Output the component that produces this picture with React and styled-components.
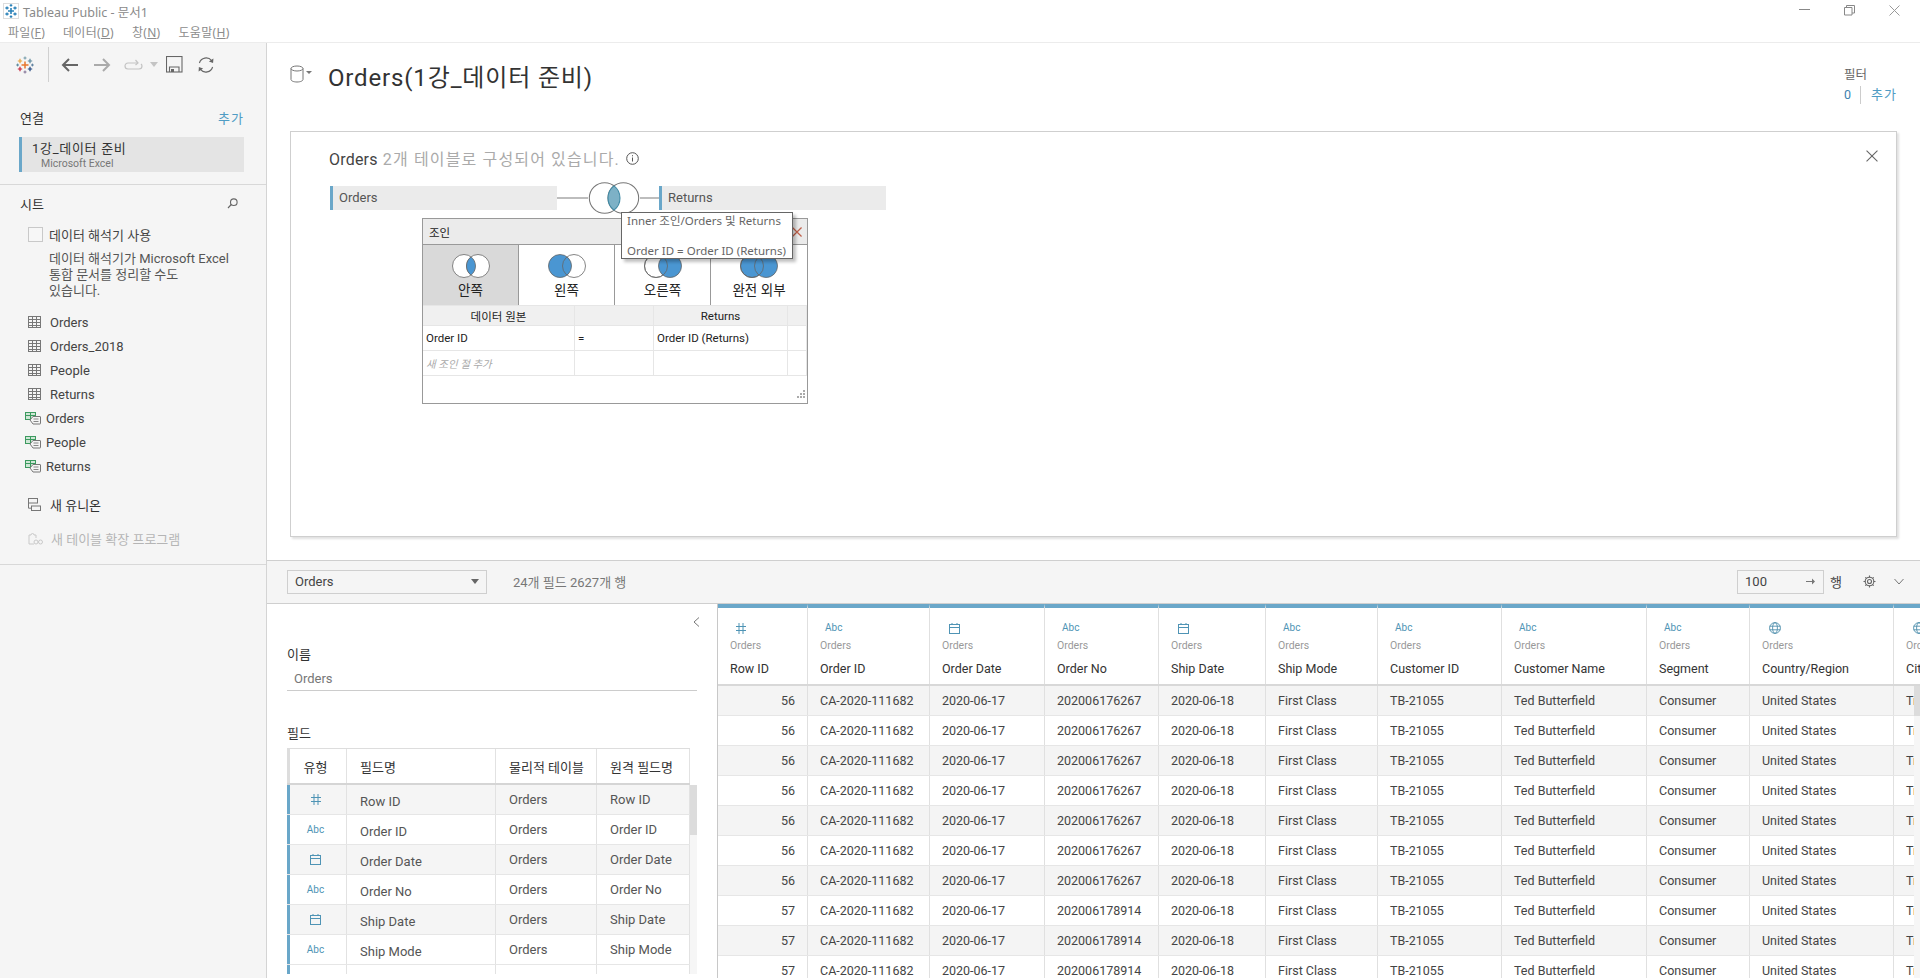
import React from 'react';
import styled, { createGlobalStyle } from 'styled-components';

const GlobalStyle = createGlobalStyle`
  html, body { margin: 0; padding: 0; height: 100%; overflow: hidden; background: #fff; }
  body { font-family: Roboto, "Noto Sans CJK KR", sans-serif; font-size: 13px; color: #333; }
  * { box-sizing: border-box; }
`;

const Shell = styled.div`
  width: 1920px;
  height: 978px;
  display: flex;
  flex-direction: column;
  overflow: hidden;
`;

const TitleBar = styled.div`
  height: 22px;
  display: flex;
  align-items: center;
  padding-left: 3px;
  gap: 4px;
  font-family: "Noto Sans", "Noto Sans CJK KR", sans-serif;
  font-size: 12.5px;
  color: #8a8a8a;
`;

const WindowButtons = styled.div`
  margin-left: auto;
  display: flex;
  gap: 34px;
  padding-right: 20px;
  padding-bottom: 2px;
  align-items: center;
`;

const MenuBar = styled.div`
  height: 21px;
  display: flex;
  align-items: center;
  padding-left: 8px;
  gap: 18px;
  font-family: "Noto Sans", "Noto Sans CJK KR", sans-serif;
  font-size: 12px;
  letter-spacing: 0.3px;
  color: #8c8c8c;
  border-bottom: 1px solid #ececec;
`;

const Body = styled.div`
  flex: 1;
  display: flex;
  min-height: 0;
`;

const Sidebar = styled.aside`
  width: 267px;
  flex: none;
  background: #f5f5f5;
  border-right: 1px solid #d4d4d4;
`;

const Toolbar = styled.div`
  height: 45px;
  display: flex;
  align-items: center;
  padding-left: 16px;
  padding-bottom: 2px;
`;

const ToolDivider = styled.div`
  width: 1px;
  height: 35px;
  background: #d0d0d0;
  margin: 0 12px 0 14px;
`;

const ToolSlot = styled.div`
  display: flex;
  align-items: center;
  margin-left: ${p => p.$ml || 0}px;
`;

const SideSection = styled.section`
  padding-bottom: ${p => p.$pb}px;
  border-bottom: 1px solid #d8d8d8;
`;

const SectionHead = styled.div`
  display: flex;
  align-items: center;
  justify-content: space-between;
  height: 24px;
  padding: 0 22px 0 20px;
  margin-top: ${p => p.$mt || 0}px;
  font-size: 13px;
  color: #333;
`;

const SearchSlot = styled.span`
  display: flex;
  margin-right: 6px;
`;

const BlueLink = styled.span`
  font-size: 13px;
  letter-spacing: 1px;
  color: #4f9cc4;
`;

const Connection = styled.div`
  margin: 8px 22px 0 19px;
  height: 35px;
  background: #e4e4e4;
  border-left: 3px solid #6aa7c9;
  padding: 3px 0 0 10px;
  font-size: 13px;
  letter-spacing: 0.7px;
  line-height: 18px;
  color: #333;
`;

const ConnectionKind = styled.div`
  font-size: 10.5px;
  letter-spacing: 0;
  line-height: 12px;
  color: #777;
  padding-left: 9px;
`;

const CheckRow = styled.label`
  display: flex;
  align-items: center;
  gap: 6px;
  padding-left: 28px;
  margin-top: 11px;
  height: 16px;
  color: #444;
`;

const CheckBox = styled.span`
  width: 15px;
  height: 15px;
  border: 1px solid #c9c9c9;
  background: #f7f7f7;
`;

const Note = styled.p`
  margin: 9px 0 0;
  padding-left: 49px;
  line-height: 16px;
  height: 48px;
  color: #555;
`;

const SheetList = styled.div`
  margin-top: 11px;
`;

const SheetRow = styled.div`
  height: 24px;
  display: flex;
  align-items: center;
  padding-left: ${p => (p.$extract ? 25 : 28)}px;
  gap: ${p => (p.$extract ? 5 : 9)}px;
  color: #444;
`;

const ActionRow = styled.div`
  height: 24px;
  display: flex;
  align-items: center;
  gap: 8px;
  padding-left: 28px;
  margin-top: ${p => p.$mt}px;
  color: ${p => (p.$disabled ? '#b5b5b5' : '#333')};
`;

const Main = styled.main`
  flex: 1;
  min-width: 0;
  display: flex;
  flex-direction: column;
`;

const PageHead = styled.div`
  height: 88px;
  display: flex;
  padding: 20px 23px 0 23px;
`;

const CylinderSlot = styled.div`
  display: flex;
  padding-top: 2px;
  gap: 2px;
  width: 38px;
`;

const PageTitle = styled.h1`
  margin: 2px 0 0;
  font-weight: 400;
  font-size: 24px;
  letter-spacing: 0.85px;
  line-height: 26px;
  color: #333;
`;

const FilterBox = styled.div`
  margin-left: auto;
  width: 53px;
  padding-top: 4px;
  font-size: 12.5px;
  color: #666;
  line-height: 16px;
`;

const FilterCount = styled.div`
  display: flex;
  align-items: center;
  margin-top: 3px;
`;

const FilterNum = styled.span`
  width: 17px;
  color: #3f82b0;
  border-right: 1px solid #ccc;
  margin-right: 10px;
  line-height: 18px;
`;

const CanvasCard = styled.div`
  position: relative;
  margin: 0 23px;
  height: 406px;
  border: 1px solid #cfcfcf;
  box-shadow: 2px 2px 2px rgba(0, 0, 0, 0.12);
  padding: 15px 0 0 39px;
`;

const CardHeading = styled.div`
  display: flex;
  align-items: center;
  gap: 6px;
  height: 22px;
  margin-left: -1px;
  font-size: 16px;
  letter-spacing: 1.15px;
  color: #aaa;
`;

const CardTable = styled.span`
  color: #444;
  letter-spacing: 0.2px;
`;

const CardClose = styled.div`
  position: absolute;
  right: 18px;
  top: 18px;
`;

const JoinRow = styled.div`
  display: flex;
  align-items: center;
  height: 24px;
  margin-top: 17px;
`;

const TableBar = styled.div`
  width: 227px;
  height: 24px;
  background: #ebebeb;
  border-left: 3px solid #6aa7c9;
  padding-left: 6px;
  line-height: 24px;
  color: #555;
`;

const Connector = styled.div`
  width: ${p => p.$w}px;
  height: 2px;
  background: #bdbdbd;
`;

const JoinDialog = styled.div`
  position: absolute;
  left: 131px;
  top: 86px;
  width: 386px;
  height: 186px;
  border: 1px solid #999;
  background: #fff;
  font-family: "Noto Sans", "Noto Sans CJK KR", sans-serif;
  font-size: 11.5px;
  color: #222;
`;

const DialogHead = styled.div`
  height: 26px;
  background: #ebebeb;
  border-bottom: 1px solid #999;
  display: flex;
  align-items: center;
  justify-content: space-between;
  padding: 0 5px 0 6px;
`;

const JoinTabs = styled.div`
  display: grid;
  grid-template-columns: repeat(4, 96px);
  height: 60px;
`;

const JoinTab = styled.div`
  display: flex;
  flex-direction: column;
  align-items: center;
  padding-top: 9px;
  font-size: 13.5px;
  line-height: 20px;
  background: ${p => (p.$active ? '#d9d9d9' : '#fff')};
  border-right: 1px solid #999;
  &:last-child { border-right: none; }
`;

const TabLabel = styled.span`
  margin-top: 2px;
`;

const JoinGridRow = styled.div`
  display: grid;
  grid-template-columns: 152px 79px 134px 19px;
  height: ${p => p.$h}px;
  background: ${p => (p.$head ? '#f0f0f0' : '#fff')};
  border-bottom: 1px solid #e6e6e6;
  border-top: ${p => (p.$head ? '1px solid #e6e6e6' : 'none')};
  font-family: Roboto, "Noto Sans CJK KR", sans-serif;
`;

const JoinCell = styled.div`
  display: flex;
  align-items: center;
  justify-content: ${p => (p.$center ? 'center' : 'flex-start')};
  padding-left: ${p => (p.$center ? 0 : 3)}px;
  border-right: 1px solid #e6e6e6;
  font-style: ${p => (p.$hint ? 'italic' : 'normal')};
  font-size: ${p => (p.$hint ? 10.5 : 11.5)}px;
  color: ${p => (p.$hint ? '#aaa' : '#222')};
`;

const Grip = styled.div`
  position: absolute;
  right: 1px;
  bottom: 1px;
`;

const Tooltip = styled.div`
  position: absolute;
  left: 330px;
  top: 80px;
  width: 172px;
  height: 47px;
  background: #fff;
  border: 1px solid #666;
  box-shadow: 3px 3px 3px rgba(0, 0, 0, 0.25);
  padding: 0 5px;
  font-family: "Noto Sans", "Noto Sans CJK KR", sans-serif;
  font-size: 11.5px;
  line-height: 15px;
  color: #666;
  white-space: nowrap;
`;

const DataToolbar = styled.div`
  margin-top: 23px;
  height: 44px;
  flex: none;
  display: flex;
  align-items: center;
  background: #f5f5f5;
  border-top: 1px solid #cfcfcf;
  border-bottom: 1px solid #cfcfcf;
  padding: 0 16px 1px 20px;
`;

const TableSelect = styled.div`
  width: 200px;
  height: 24px;
  display: flex;
  align-items: center;
  justify-content: space-between;
  border: 1px solid #cfcfcf;
  padding: 0 7px;
  color: #444;
`;

const Caret = styled.span`
  width: 0;
  height: 0;
  border-left: ${p => p.$size || 4}px solid transparent;
  border-right: ${p => p.$size || 4}px solid transparent;
  border-top: ${p => (p.$size ? p.$size : 5)}px solid ${p => p.$color || '#666'};
  margin-top: ${p => p.$mt || 0}px;
`;

const RowCount = styled.span`
  margin-left: 26px;
  color: #777;
`;

const LimitBox = styled.div`
  margin-left: auto;
  width: 87px;
  height: 24px;
  display: flex;
  align-items: center;
  justify-content: space-between;
  border: 1px solid #cfcfcf;
  padding: 0 8px 0 7px;
  color: #444;
`;

const RowWord = styled.span`
  margin-left: 6px;
  color: #444;
`;

const ToolIcon = styled.span`
  display: flex;
  margin-left: ${p => p.$ml}px;
`;

const DataArea = styled.div`
  flex: 1;
  min-height: 0;
  display: flex;
`;

const FieldPane = styled.div`
  width: 451px;
  flex: none;
  padding: 0 20px;
  border-right: 1px solid #c8c8c8;
`;

const CollapseRow = styled.div`
  display: flex;
  justify-content: flex-end;
  height: 16px;
  margin: 13px -3px 0 0;
`;

const PaneLabel = styled.div`
  height: 16px;
  line-height: 16px;
  margin-top: ${p => p.$mt}px;
  color: #333;
`;

const NameInput = styled.div`
  height: 24px;
  margin-top: 4px;
  padding-left: 7px;
  line-height: 24px;
  color: #777;
  border-bottom: 1px solid #ccc;
`;

const FieldTableWrap = styled.div`
  position: relative;
  margin-top: 6px;
  height: 226px;
  overflow: hidden;
`;

const FieldGridRow = styled.div`
  display: grid;
  grid-template-columns: 60px 149px 101px 93px;
  width: 403px;
  height: ${p => (p.$head ? 37 : 30)}px;
  background: ${p => (p.$odd ? '#f5f5f5' : '#fff')};
  border-top: ${p => (p.$head ? '1px solid #ddd' : 'none')};
  border-bottom: ${p => (p.$head ? '2px' : '1px')} solid ${p => (p.$head ? '#d5d5d5' : '#e6e6e6')};
`;

const FieldCell = styled.div`
  display: flex;
  align-items: center;
  justify-content: ${p => (p.$center ? 'center' : 'flex-start')};
  padding-left: ${p => (p.$center ? 0 : 13)}px;
  padding-top: ${p => p.$pt || 0}px;
  padding-bottom: ${p => p.$pb || 0}px;
  border-right: 1px solid #e2e2e2;
  color: #555;
`;

const FieldTypeCell = styled(FieldCell)`
  border-left: 3px solid ${p => (p.$head ? '#ddd' : '#6aa7c9')};
  padding-right: 5px;
  color: #333;
`;

const FieldHeadCell = styled(FieldCell)`
  color: #333;
`;

const ScrollTrack = styled.div`
  position: absolute;
  top: ${p => p.$top}px;
  right: 0;
  bottom: 0;
  width: ${p => p.$w}px;
  background: #f6f6f6;
`;

const ScrollThumb = styled.div`
  height: ${p => p.$h}px;
  background: #dcdcdc;
`;

const DataGrid = styled.div`
  position: relative;
  flex: 1;
  min-width: 0;
  overflow: hidden;
`;

const GridRow = styled.div`
  display: flex;
  width: max-content;
  height: ${p => (p.$head ? 82 : 30)}px;
  background: ${p => (p.$odd ? '#f4f4f4' : '#fff')};
  border-bottom: ${p => (p.$head ? '2px' : '1px')} solid ${p => (p.$head ? '#d8d8d8' : '#e6e6e6')};
`;

const GridHead = styled.div`
  width: ${p => p.$w}px;
  flex: none;
  border-top: 4px solid #6aa7c9;
  border-right: 1px solid #e0e0e0;
  padding: 0 0 0 12px;
  display: flex;
  flex-direction: column;
`;

const HeadIcon = styled.div`
  height: 16px;
  margin-top: 12px;
  padding-left: ${p => p.$pl}px;
  display: flex;
  align-items: center;
`;

const HeadSource = styled.div`
  margin-top: 3px;
  font-size: 10.5px;
  line-height: 14px;
  color: #999;
`;

const HeadName = styled.div`
  margin-top: 8px;
  font-size: 12.5px;
  line-height: 16px;
  color: #333;
  white-space: nowrap;
`;

const GridCell = styled.div`
  width: ${p => p.$w}px;
  flex: none;
  display: flex;
  align-items: center;
  justify-content: ${p => (p.$right ? 'flex-end' : 'flex-start')};
  padding: 0 12px;
  border-right: 1px solid #e0e0e0;
  font-size: 12.5px;
  color: #444;
  white-space: nowrap;
`;

const AbcMark = styled.span`
  font-size: 10px;
  line-height: 12px;
  color: #4f94b5;
`;

// icons

function Cross({ x, y, s, color, w = 1.3 }) {
  return (
    <g stroke={color} strokeWidth={w}>
      <path d={`M${x - s} ${y}H${x + s}M${x} ${y - s}V${y + s}`} />
    </g>
  );
}

function TableauLogo() {
  return (
    <svg width="18" height="18" viewBox="0 0 18 18">
      <Cross x={9} y={9} s={3.5} color="#e8762c" w={1.5} />
      <Cross x={4} y={5} s={2.2} color="#e8a33d" w={1.2} />
      <Cross x={14} y={5} s={2.2} color="#5b879b" w={1.2} />
      <Cross x={4} y={13} s={2.2} color="#c72037" w={1.2} />
      <Cross x={14} y={13} s={2.2} color="#1f447e" w={1.2} />
      <Cross x={9} y={2} s={1.5} color="#7099a6" w={1} />
      <Cross x={9} y={16} s={1.5} color="#7f6f93" w={1} />
      <Cross x={1.6} y={9} s={1.4} color="#59879b" w={1} />
      <Cross x={16.4} y={9} s={1.4} color="#5a7f9e" w={1} />
    </svg>
  );
}

function AppIcon() {
  return (
    <svg width="16" height="18" viewBox="0 0 16 18">
      <rect x="0.5" y="1.5" width="15" height="15" fill="#fff" stroke="#ddd" />
      <Cross x={8} y={9} s={3} color="#2b82b8" w={1.6} />
      <Cross x={4} y={6} s={1.6} color="#2b82b8" />
      <Cross x={12} y={6} s={1.6} color="#2b82b8" />
      <Cross x={4} y={12} s={1.6} color="#2b82b8" />
      <Cross x={12} y={12} s={1.6} color="#2b82b8" />
      <Cross x={8} y={3.4} s={1.3} color="#2b82b8" w={1.1} />
      <Cross x={8} y={14.6} s={1.3} color="#2b82b8" w={1.1} />
    </svg>
  );
}

function ArrowIcon({ dir, color }) {
  const d = dir === 'left' ? 'M17 8H2M8 2L2 8l6 6' : 'M1 8h15M10 2l6 6-6 6';
  return (
    <svg width="18" height="16" viewBox="0 0 18 16" fill="none" stroke={color} strokeWidth="2">
      <path d={d} />
    </svg>
  );
}

function RedoIcon() {
  return (
    <svg width="19" height="12" viewBox="0 0 19 12" fill="none" stroke="#c4c4c4" strokeWidth="1.2">
      <path d="M13 4H4a3 3 0 0 0 0 6h11a3 3 0 0 0 3-3 3 3 0 0 0-1-2" />
      <path d="M11.5 1l2.5 3-2.5 2" />
    </svg>
  );
}

function SaveIcon() {
  return (
    <svg width="17" height="17" viewBox="0 0 17 17" fill="none" stroke="#666" strokeWidth="1.1">
      <rect x="0.5" y="0.5" width="15.5" height="15.5" />
      <path d="M3.5 16v-5h9.5v5" />
      <rect x="5" y="13" width="3" height="3" fill="#666" stroke="none" />
    </svg>
  );
}

function RefreshIcon() {
  return (
    <svg width="18" height="18" viewBox="0 0 18 18" fill="none" stroke="#666" strokeWidth="1.1">
      <path d="M2.4 7A7 7 0 0 1 14.6 4.6" />
      <path d="M15.6 11A7 7 0 0 1 3.4 13.4" />
      <path d="M16.4 2.4l-.3 4.6-4.2-1.6z" fill="#666" stroke="none" />
      <path d="M1.6 15.6l.3-4.6 4.2 1.6z" fill="#666" stroke="none" />
    </svg>
  );
}

function SheetIcon() {
  return (
    <svg width="13" height="12" viewBox="0 0 13 12" fill="none" stroke="#777" strokeWidth="1">
      <rect x="0.5" y="0.5" width="12" height="11" />
      <path d="M0 3.5h13M0 6.5h13M0 9.5h13M4.5 0v12M8.5 0v12" />
    </svg>
  );
}

function ExtractIcon() {
  return (
    <svg width="16" height="13" viewBox="0 0 16 13">
      <rect x="0.5" y="0.5" width="10" height="7" fill="#cfe6d6" stroke="#3c9a5f" />
      <path d="M0 3.5h11M5.5 0v7" stroke="#3c9a5f" />
      <path d="M8 4.5h7a.5.5 0 0 1 .5.5v6.5a.5.5 0 0 1-.5.5H8L5 8z" fill="#f5f5f5" stroke="#777" />
      <path d="M8.5 7h5M8.5 9.5h5" stroke="#888" />
    </svg>
  );
}

function UnionIcon() {
  return (
    <svg width="14" height="13" viewBox="0 0 14 13" fill="none" stroke="#777" strokeWidth="1">
      <rect x="0.5" y="0.5" width="9" height="4.5" />
      <rect x="3.5" y="8" width="9" height="4.5" />
      <path d="M0.5 5V10.2H3.5" />
    </svg>
  );
}

function ExtensionIcon() {
  return (
    <svg width="15" height="14" viewBox="0 0 15 14" fill="none" stroke="#c9c9c9" strokeWidth="1">
      <path d="M1 8V4h2a1.5 1.5 0 0 1 3 0h2v3" />
      <path d="M1 8v5h5" />
      <circle cx="8" cy="11" r="2" />
      <circle cx="12.5" cy="11" r="2" />
    </svg>
  );
}

function SearchIcon() {
  return (
    <svg width="11" height="11" viewBox="0 0 11 11" fill="none" stroke="#666" strokeWidth="1.1">
      <circle cx="6.8" cy="4.2" r="3.3" />
      <path d="M4.3 6.5L1 10" />
    </svg>
  );
}

function CylinderIcon() {
  return (
    <svg width="14" height="18" viewBox="0 0 14 18" fill="none" stroke="#777" strokeWidth="1">
      <ellipse cx="7" cy="3.5" rx="6" ry="2.5" />
      <path d="M1 3.5V14.5c0 1.4 2.7 2.5 6 2.5s6-1.1 6-2.5V3.5" />
    </svg>
  );
}

function CloseIcon({ size = 11, color = '#777', w = 1 }) {
  return (
    <svg width={size} height={size} viewBox="0 0 11 11" fill="none" stroke={color} strokeWidth={w}>
      <path d="M0.5 0.5l10 10M10.5 0.5l-10 10" />
    </svg>
  );
}

function InfoIcon() {
  return (
    <svg width="13" height="13" viewBox="0 0 13 13" fill="none" stroke="#555" strokeWidth="1">
      <circle cx="6.5" cy="6.5" r="5.8" />
      <path d="M6.5 5.5v4M6.5 3.2v1.1" />
    </svg>
  );
}

function VennIcon({ kind, width = 38, height = 24, fill = '#4a96d2', line = '#666', lens }) {
  const left = kind === 'left' || kind === 'full';
  const right = kind === 'right' || kind === 'full';
  return (
    <svg width={width} height={height} viewBox="0 0 38 24">
      <circle cx="12" cy="12" r="11.5" fill={left ? fill : '#fff'} stroke={line} strokeWidth="0.8" />
      <circle cx="26" cy="12" r="11.5" fill={right ? fill : left ? 'none' : '#fff'} stroke={line} strokeWidth="0.8" />
      {kind === 'inner' && (
        <path d="M19 2.88A11.5 11.5 0 0 1 19 21.12A11.5 11.5 0 0 1 19 2.88Z" fill={fill} stroke={lens || line} strokeWidth="0.8" />
      )}
      {(kind === 'full' || kind === 'right') && <circle cx="12" cy="12" r="11.5" fill="none" stroke={line} strokeWidth="0.8" />}
    </svg>
  );
}

function HashIcon() {
  return (
    <svg width="10" height="11" viewBox="0 0 10 11" fill="none" stroke="#4f94b5" strokeWidth="1">
      <path d="M0 3.5h10M0 7.5h10M3 0v11M7 0v11" />
    </svg>
  );
}

function CalendarIcon() {
  return (
    <svg width="11" height="11" viewBox="0 0 11 11" fill="none" stroke="#4f94b5" strokeWidth="1">
      <rect x="0.5" y="1.5" width="10" height="9" />
      <path d="M0 4.5h11M3 0v2M8 0v2" />
    </svg>
  );
}

function GlobeIcon() {
  return (
    <svg width="12" height="12" viewBox="0 0 12 12" fill="none" stroke="#4f8ead" strokeWidth="0.9">
      <circle cx="6" cy="6" r="5.4" />
      <ellipse cx="6" cy="6" rx="2.4" ry="5.4" />
      <path d="M0.6 4.2h10.8M0.6 7.8h10.8" />
    </svg>
  );
}

function TypeIcon({ type }) {
  if (type === 'num') return <HashIcon />;
  if (type === 'date') return <CalendarIcon />;
  if (type === 'geo') return <GlobeIcon />;
  return <AbcMark>Abc</AbcMark>;
}

function GripIcon() {
  return (
    <svg width="9" height="9" viewBox="0 0 9 9" fill="#aaa">
      <rect x="6" y="0" width="2" height="2" />
      <rect x="3" y="3" width="2" height="2" />
      <rect x="6" y="3" width="2" height="2" />
      <rect x="0" y="6" width="2" height="2" />
      <rect x="3" y="6" width="2" height="2" />
      <rect x="6" y="6" width="2" height="2" />
    </svg>
  );
}

function GearIcon() {
  return (
    <svg width="13" height="13" viewBox="0 0 13 13" fill="none" stroke="#666" strokeWidth="1.1">
      <circle cx="6.5" cy="6.5" r="2" />
      <circle cx="6.5" cy="6.5" r="4.3" />
      <path d="M6.5 0.5v1.7M6.5 10.8v1.7M0.5 6.5h1.7M10.8 6.5h1.7M2.3 2.3l1.1 1.1M9.6 9.6l1.1 1.1M2.3 10.7l1.1-1.1M9.6 3.4l1.1-1.1" />
    </svg>
  );
}

function Chevron({ dir }) {
  const isLeft = dir === 'left';
  return (
    <svg width={isLeft ? 7 : 10} height={isLeft ? 10 : 7} viewBox={isLeft ? '0 0 7 10' : '0 0 10 7'} fill="none" stroke="#777" strokeWidth="1">
      <path d={isLeft ? 'M6 0.5L1 5l5 4.5' : 'M0.5 1L5 6l4.5-5'} />
    </svg>
  );
}

// data

const sheets = ['Orders', 'Orders_2018', 'People', 'Returns'];
const extracts = ['Orders', 'People', 'Returns'];

const joinKinds = [
  { kind: 'inner', label: '안쪽', active: true },
  { kind: 'left', label: '왼쪽' },
  { kind: 'right', label: '오른쪽' },
  { kind: 'full', label: '완전 외부' },
];

const fields = [
  { type: 'num', name: 'Row ID' },
  { type: 'abc', name: 'Order ID' },
  { type: 'date', name: 'Order Date' },
  { type: 'abc', name: 'Order No' },
  { type: 'date', name: 'Ship Date' },
  { type: 'abc', name: 'Ship Mode' },
];

const columns = [
  { name: 'Row ID', type: 'num', w: 90, pl: 6, right: true },
  { name: 'Order ID', type: 'abc', w: 122, pl: 5 },
  { name: 'Order Date', type: 'date', w: 115, pl: 7 },
  { name: 'Order No', type: 'abc', w: 114, pl: 5 },
  { name: 'Ship Date', type: 'date', w: 107, pl: 7 },
  { name: 'Ship Mode', type: 'abc', w: 112, pl: 5 },
  { name: 'Customer ID', type: 'abc', w: 124, pl: 5 },
  { name: 'Customer Name', type: 'abc', w: 145, pl: 5 },
  { name: 'Segment', type: 'abc', w: 103, pl: 5 },
  { name: 'Country/Region', type: 'geo', w: 144, pl: 7 },
  { name: 'City', type: 'geo', w: 80, pl: 7 },
];

const firstRow = ['56', 'CA-2020-111682', '2020-06-17', '202006176267', '2020-06-18', 'First Class', 'TB-21055', 'Ted Butterfield', 'Consumer', 'United States', 'Troy'];
const laterRow = ['57', 'CA-2020-111682', '2020-06-17', '202006178914', '2020-06-18', 'First Class', 'TB-21055', 'Ted Butterfield', 'Consumer', 'United States', 'Troy'];
const rows = [firstRow, firstRow, firstRow, firstRow, firstRow, firstRow, firstRow, laterRow, laterRow, laterRow];

export default function App() {
  return (
    <Shell>
      <GlobalStyle />
      <TitleBar>
        <AppIcon />
        <span>Tableau Public - 문서1</span>
        <WindowButtons>
          <svg width="11" height="2" viewBox="0 0 11 2"><rect width="11" height="1" fill="#888" /></svg>
          <svg width="11" height="11" viewBox="0 0 11 11" fill="none" stroke="#888"><path d="M0.5 2.5h7.5v7.5H0.5zM2.5 2.5v-2h8v7.5h-2.5" /></svg>
          <CloseIcon size={11} color="#999" />
        </WindowButtons>
      </TitleBar>
      <MenuBar>
        <span>파일(<u>F</u>)</span>
        <span>데이터(<u>D</u>)</span>
        <span>창(<u>N</u>)</span>
        <span>도움말(<u>H</u>)</span>
      </MenuBar>
      <Body>
        <Sidebar>
          <SideSection $pb={12}>
            <Toolbar>
              <TableauLogo />
              <ToolDivider />
              <ToolSlot><ArrowIcon dir="left" color="#666" /></ToolSlot>
              <ToolSlot $ml={14}><ArrowIcon dir="right" color="#aaa" /></ToolSlot>
              <ToolSlot $ml={13}><RedoIcon /></ToolSlot>
              <ToolSlot $ml={7}><Caret $color="#c4c4c4" /></ToolSlot>
              <ToolSlot $ml={8}><SaveIcon /></ToolSlot>
              <ToolSlot $ml={14}><RefreshIcon /></ToolSlot>
            </Toolbar>
            <SectionHead $mt={17}>
              <span>연결</span>
              <BlueLink>추가</BlueLink>
            </SectionHead>
            <Connection>
              1강_데이터 준비
              <ConnectionKind>Microsoft Excel</ConnectionKind>
            </Connection>
          </SideSection>
          <SideSection $pb={14}>
            <SectionHead $mt={6}>
              <span>시트</span>
              <SearchSlot><SearchIcon /></SearchSlot>
            </SectionHead>
            <CheckRow>
              <CheckBox />
              데이터 해석기 사용
            </CheckRow>
            <Note>
              데이터 해석기가 Microsoft Excel
              <br />
              통합 문서를 정리할 수도
              <br />
              있습니다.
            </Note>
            <SheetList>
              {sheets.map(name => (
                <SheetRow key={name}><SheetIcon />{name}</SheetRow>
              ))}
              {extracts.map(name => (
                <SheetRow key={name} $extract><ExtractIcon />{name}</SheetRow>
              ))}
            </SheetList>
            <ActionRow $mt={14}><UnionIcon />새 유니온</ActionRow>
            <ActionRow $mt={10} $disabled><ExtensionIcon />새 테이블 확장 프로그램</ActionRow>
          </SideSection>
        </Sidebar>
        <Main>
          <PageHead>
            <CylinderSlot>
              <CylinderIcon />
              <Caret $color="#777" $size={3} $mt={6} />
            </CylinderSlot>
            <PageTitle>Orders(1강_데이터 준비)</PageTitle>
            <FilterBox>
              필터
              <FilterCount>
                <FilterNum>0</FilterNum>
                <BlueLink>추가</BlueLink>
              </FilterCount>
            </FilterBox>
          </PageHead>
          <CanvasCard>
            <CardHeading>
              <span><CardTable>Orders</CardTable> 2개 테이블로 구성되어 있습니다.</span>
              <InfoIcon />
            </CardHeading>
            <CardClose><CloseIcon size={12} color="#666" /></CardClose>
            <JoinRow>
              <TableBar>Orders</TableBar>
              <Connector $w={31} />
              <VennIcon kind="inner" width={52} height={32} fill="#7db1c6" line="#777" lens="#3f8aa5" />
              <Connector $w={19} />
              <TableBar>Returns</TableBar>
            </JoinRow>
            <JoinDialog>
              <DialogHead>
                <span>조인</span>
                <CloseIcon size={10} color="#c0604a" w={1.4} />
              </DialogHead>
              <JoinTabs>
                {joinKinds.map(t => (
                  <JoinTab key={t.kind} $active={t.active}>
                    <VennIcon kind={t.kind} />
                    <TabLabel>{t.label}</TabLabel>
                  </JoinTab>
                ))}
              </JoinTabs>
              <JoinGridRow $head $h={21}>
                <JoinCell $center>데이터 원본</JoinCell>
                <JoinCell />
                <JoinCell $center>Returns</JoinCell>
                <JoinCell />
              </JoinGridRow>
              <JoinGridRow $h={25}>
                <JoinCell>Order ID</JoinCell>
                <JoinCell>=</JoinCell>
                <JoinCell>Order ID (Returns)</JoinCell>
                <JoinCell />
              </JoinGridRow>
              <JoinGridRow $h={25}>
                <JoinCell $hint>새 조인 절 추가</JoinCell>
                <JoinCell />
                <JoinCell />
                <JoinCell />
              </JoinGridRow>
              <Grip><GripIcon /></Grip>
            </JoinDialog>
            <Tooltip>
              Inner 조인/Orders 및 Returns
              <br />
              <br />
              Order ID = Order ID (Returns)
            </Tooltip>
          </CanvasCard>
          <DataToolbar>
            <TableSelect>
              Orders
              <Caret />
            </TableSelect>
            <RowCount>24개 필드 2627개 행</RowCount>
            <LimitBox>
              100
              <svg width="9" height="7" viewBox="0 0 9 7" fill="#777"><path d="M0 3h6V0.5L9 3.5 6 6.5V4H0z" /></svg>
            </LimitBox>
            <RowWord>행</RowWord>
            <ToolIcon $ml={21}><GearIcon /></ToolIcon>
            <ToolIcon $ml={18}><Chevron dir="down" /></ToolIcon>
          </DataToolbar>
          <DataArea>
            <FieldPane>
              <CollapseRow><Chevron dir="left" /></CollapseRow>
              <PaneLabel $mt={14}>이름</PaneLabel>
              <NameInput>Orders</NameInput>
              <PaneLabel $mt={35}>필드</PaneLabel>
              <FieldTableWrap>
                <FieldGridRow $head>
                  <FieldTypeCell $head $center $pt={1}>유형</FieldTypeCell>
                  <FieldHeadCell $pt={1}>필드명</FieldHeadCell>
                  <FieldHeadCell $pt={1}>물리적 테이블</FieldHeadCell>
                  <FieldHeadCell $pt={1}>원격 필드명</FieldHeadCell>
                </FieldGridRow>
                {fields.map((f, i) => (
                  <FieldGridRow key={f.name} $odd={i % 2 === 0}>
                    <FieldTypeCell $center><TypeIcon type={f.type} /></FieldTypeCell>
                    <FieldCell $pt={3}>{f.name}</FieldCell>
                    <FieldCell $pb={1}>Orders</FieldCell>
                    <FieldCell $pb={1}>{f.name}</FieldCell>
                  </FieldGridRow>
                ))}
                <FieldGridRow>
                  <FieldTypeCell />
                  <FieldCell />
                  <FieldCell />
                  <FieldCell />
                </FieldGridRow>
                <ScrollTrack $top={37} $w={7}><ScrollThumb $h={50} /></ScrollTrack>
              </FieldTableWrap>
            </FieldPane>
            <DataGrid>
              <GridRow $head>
                {columns.map(c => (
                  <GridHead key={c.name} $w={c.w}>
                    <HeadIcon $pl={c.pl}><TypeIcon type={c.type} /></HeadIcon>
                    <HeadSource>Orders</HeadSource>
                    <HeadName>{c.name}</HeadName>
                  </GridHead>
                ))}
              </GridRow>
              {rows.map((row, r) => (
                <GridRow key={r} $odd={r % 2 === 0}>
                  {row.map((value, c) => (
                    <GridCell key={c} $w={columns[c].w} $right={columns[c].right}>{value}</GridCell>
                  ))}
                </GridRow>
              ))}
              <ScrollTrack $top={82} $w={6}><ScrollThumb $h={30} /></ScrollTrack>
            </DataGrid>
          </DataArea>
        </Main>
      </Body>
    </Shell>
  );
}
